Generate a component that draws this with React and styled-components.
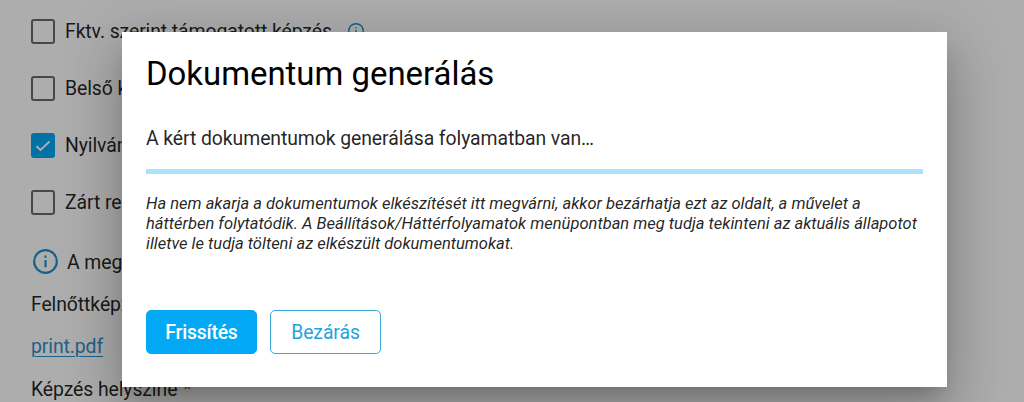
import React from "react";
import styled, { createGlobalStyle } from "styled-components";

const GlobalStyle = createGlobalStyle`
  * { box-sizing: border-box; }
  html, body { margin: 0; padding: 0; }
  body {
    background: #fff;
    color: rgba(0, 0, 0, 0.87);
    font-family: Roboto, "Liberation Sans", sans-serif;
    overflow: hidden;
  }
`;

const Page = styled.div`
  position: relative;
  width: 1024px;
  height: 402px;
  overflow: hidden;
`;

const Form = styled.form`
  display: flex;
  flex-direction: column;
  padding: 3px 0 0 31px;
  font-size: 19.4px;
  letter-spacing: -0.09px;
  white-space: nowrap;
`;

const CheckRow = styled.label`
  display: flex;
  align-items: center;
  height: 57px;
`;

const Box = styled.span`
  display: flex;
  align-items: center;
  justify-content: center;
  width: 24px;
  height: 25px;
  margin-right: 10px;
  border: 2px solid ${(p) => (p.$checked ? "#03a9f4" : "#6b6b6b")};
  border-radius: 3px;
  background: ${(p) => (p.$checked ? "#03a9f4" : "transparent")};
`;

const InfoMark = styled.svg`
  flex: none;
  width: ${(p) => p.$size}px;
  height: ${(p) => p.$size}px;
  margin: ${(p) => p.$margin};
`;

const Line = styled.div`
  display: flex;
  align-items: center;
  height: ${(p) => p.$height}px;
`;

const FileLink = styled.a`
  color: #2f8fc9;
  text-decoration: underline;
  text-decoration-thickness: 1px;
  text-underline-offset: 3px;
`;

const Required = styled.span`
  margin-left: 6px;
  color: #e53950;
`;

const Backdrop = styled.div`
  position: absolute;
  inset: 0;
  background: rgba(0, 0, 0, 0.32);
`;

const Dialog = styled.section`
  position: absolute;
  left: 122px;
  top: 32px;
  width: 825px;
  height: 355.4px;
  padding: 21px 24px 0;
  background: #fff;
  box-shadow:
    0 13px 18px -8px rgba(0, 0, 0, 0.2),
    0 29px 46px 4px rgba(0, 0, 0, 0.14),
    0 11px 56px 10px rgba(0, 0, 0, 0.12);
`;

const Title = styled.h1`
  margin: 0;
  color: #000;
  font-size: 32.9px;
  font-weight: 400;
  line-height: 41px;
`;

const Status = styled.p`
  margin: 32px 0 0;
  font-size: 19.4px;
  letter-spacing: -0.08px;
  line-height: 25px;
`;

const Progress = styled.div`
  height: 5px;
  margin-top: 18px;
  background: #aae3fb;
`;

const Note = styled.p`
  margin: 20px 0 0;
  font-size: 16.53px;
  font-style: italic;
  line-height: 20px;
  white-space: nowrap;
`;

const Actions = styled.div`
  display: flex;
  gap: 13px;
  margin-top: 56px;
`;

const Button = styled.button`
  width: 111px;
  height: 44px;
  padding: 0;
  border: 1px solid ${(p) => (p.$primary ? "#03a9f4" : "#3aaad8")};
  border-radius: 5px;
  background: ${(p) => (p.$primary ? "#03a9f4" : "#fff")};
  color: ${(p) => (p.$primary ? "#fff" : "#1fa4dc")};
  font-family: inherit;
  font-size: 19.4px;
  letter-spacing: ${(p) => (p.$primary ? -0.2 : -0.08)}px;
  font-weight: ${(p) => (p.$primary ? 500 : 400)};
`;

const Info = ({ size, margin }) => (
  <InfoMark $size={size} $margin={margin} viewBox="0 0 24 24" fill="none" stroke="#1f8fd0" strokeWidth="2.1">
    <circle cx="12" cy="12" r="10.9" />
    <path d="M12 10.5v7M12 6.2v2.1" />
  </InfoMark>
);

const options = [
  { label: "Fktv. szerint támogatott képzés", info: true },
  { label: "Belső képzés" },
  { label: "Nyilvános képzés", checked: true },
  { label: "Zárt rendszerű képzés" },
];

export default function App() {
  return (
    <>
      <GlobalStyle />
      <Page>
        <Form>
          {options.map((o) => (
            <CheckRow key={o.label}>
              <Box $checked={o.checked}>
                {o.checked && (
                  <svg width="16" height="14" viewBox="0 0 16 14" fill="none" stroke="#fff" strokeWidth="1.9">
                    <path d="M1.5 7.2l4 3.8L14.5 2.5" />
                  </svg>
                )}
              </Box>
              {o.label}
              {o.info && <Info size={16} margin="0 0 2px 16px" />}
            </CheckRow>
          ))}
          <Line $height={62}>
            <Info size={25} margin="0 9px 2px 2px" />A megadott adatok
          </Line>
          <Line $height={22}>Felnőttképzési szerződés</Line>
          <Line $height={63}>
            <FileLink>print.pdf</FileLink>
          </Line>
          <Line $height={22}>
            Képzés helyszíne<Required>*</Required>
          </Line>
        </Form>
        <Backdrop />
        <Dialog role="dialog">
          <Title>Dokumentum generálás</Title>
          <Status>A kért dokumentumok generálása folyamatban van…</Status>
          <Progress />
          <Note>
            Ha nem akarja a dokumentumok elkészítését itt megvárni, akkor bezárhatja ezt az oldalt, a művelet a
            <br />
            háttérben folytatódik. A Beállítások/Háttérfolyamatok menüpontban meg tudja tekinteni az aktuális állapotot
            <br />
            illetve le tudja tölteni az elkészült dokumentumokat.
          </Note>
          <Actions>
            <Button $primary>Frissítés</Button>
            <Button>Bezárás</Button>
          </Actions>
        </Dialog>
      </Page>
    </>
  );
}
